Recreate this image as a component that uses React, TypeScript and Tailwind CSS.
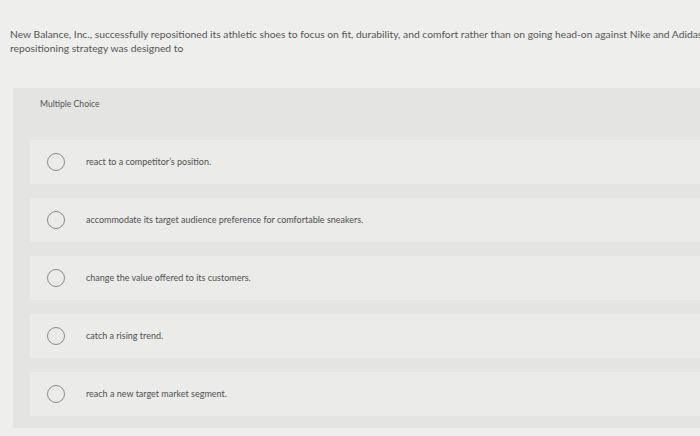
const options = [
  'react to a competitor\u2019s position.',
  'accommodate its target audience preference for comfortable sneakers.',
  'change the value offered to its customers.',
  'catch a rising trend.',
  'reach a new target market segment.',
]

function Radio() {
  return <span className="block w-[18px] h-[18px] rounded-full border-[1.5px] border-[#8a8a8a] shrink-0" />
}

export default function App() {
  return (
    <div className="w-[700px] h-[436px] overflow-hidden bg-[#eeeeec] text-[#555] font-['Lato','Liberation_Sans',sans-serif]">
      <div className="pt-[27px] pl-[10px] text-[10.3px] leading-[14px]">
        <p className="whitespace-nowrap">
          New Balance, Inc., successfully repositioned its athletic shoes to focus on fit, durability, and comfort rather than on going head-on against Nike and Adidas. This
        </p>
        <p>repositioning strategy was designed to</p>
      </div>
      <div className="mt-[33px] ml-[13px] h-[340px] bg-[#e4e4e2]">
        <div className="h-[32px] pl-[27px] flex items-center text-[8.6px] text-[#555]">Multiple Choice</div>
        <div className="pt-[20px] pl-[17px] flex flex-col gap-[14px]">
          {options.map((o, i) => (
            <div key={i} className="h-[44px] bg-[#ebebe9] flex items-center pl-[17px]">
              <Radio />
              <span className="ml-[21px] text-[9px] text-[#505050]">{o}</span>
            </div>
          ))}
        </div>
      </div>
    </div>
  )
}
